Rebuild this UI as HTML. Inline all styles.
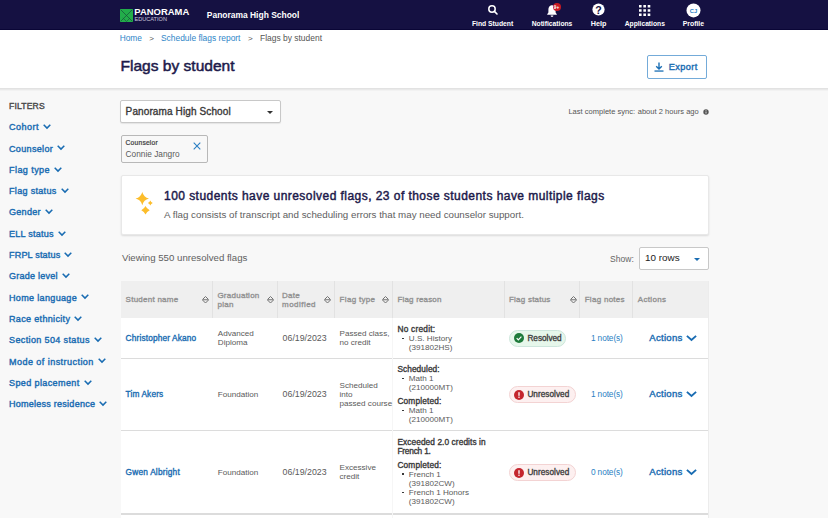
<!DOCTYPE html>
<html><head><meta charset="utf-8"><style>
html,body{margin:0;padding:0;}
body{width:828px;height:518px;overflow:hidden;position:relative;background:#f8f8f8;font-family:"Liberation Sans", sans-serif;}
.t{position:absolute;white-space:nowrap;line-height:1;font-family:"Liberation Sans", sans-serif;}
.pb{display:inline-block;width:0;height:0;vertical-align:baseline}
svg{overflow:visible}
</style></head><body>
<div style="position:absolute;left:0px;top:0px;width:828px;height:30px;background:#151142"></div>
<div style="position:absolute;left:0px;top:29px;width:828px;height:1px;background:#0a0636"></div>
<div style="position:absolute;left:0px;top:30px;width:828px;height:58px;background:#fff"></div>
<div style="position:absolute;left:0px;top:88px;width:828px;height:1px;background:#e2e2e2"></div>
<div style="position:absolute;left:0px;top:89px;width:828px;height:1px;background:#e9e9e9"></div>
<div style="position:absolute;left:0px;top:90px;width:828px;height:1px;background:#f2f2f2"></div>
<div style="position:absolute;left:0px;top:91px;width:828px;height:427px;background:#f8f8f8"></div>
<svg style="position:absolute;left:120px;top:8.8px" width="13" height="13" viewBox="0 0 13 13"><rect width="13" height="13" fill="#22ad4a"/><path d="M0.6 0.6L12.4 12.4M12.4 0.6L0.6 12.4" stroke="#17503a" stroke-width="0.7"/><path d="M2.8 8.9L6.5 12.5L10 9" fill="none" stroke="#17503a" stroke-width="0.6"/></svg>
<div class="t" style="left:134.3px;top:7.204px;font-size:9.461px;font-weight:700;color:#fff;"><span id="x0" class="tx">PANORAMA</span><span id="p0" class="pb"></span></div>
<div class="t" style="left:134.5px;top:17.307px;font-size:5.589px;font-weight:400;color:#c9c6dc;"><span id="x1" class="tx">EDUCATION</span><span id="p1" class="pb"></span></div>
<div class="t" style="left:206.8px;top:11.112px;font-size:8.465px;font-weight:700;color:#fff;"><span id="x2" class="tx">Panorama High School</span><span id="p2" class="pb"></span></div>
<div class="t" style="left:452.6px;top:20.810px;font-size:6.785px;font-weight:700;color:#fff;width:80px;text-align:center"><span id="x3" class="tx">Find Student</span><span id="p3" class="pb"></span></div>
<div class="t" style="left:512px;top:20.808px;font-size:6.713px;font-weight:700;color:#fff;width:80px;text-align:center"><span id="x4" class="tx">Notifications</span><span id="p4" class="pb"></span></div>
<div class="t" style="left:558.5px;top:19.810px;font-size:7.209px;font-weight:700;color:#fff;width:80px;text-align:center"><span id="x5" class="tx">Help</span><span id="p5" class="pb"></span></div>
<div class="t" style="left:604.8px;top:20.812px;font-size:6.690px;font-weight:700;color:#fff;width:80px;text-align:center"><span id="x6" class="tx">Applications</span><span id="p6" class="pb"></span></div>
<div class="t" style="left:653.4px;top:20.804px;font-size:6.884px;font-weight:700;color:#fff;width:80px;text-align:center"><span id="x7" class="tx">Profile</span><span id="p7" class="pb"></span></div>
<svg style="position:absolute;left:487px;top:4px" width="12" height="12" viewBox="0 0 12 12"><circle cx="5" cy="5" r="3.2" fill="none" stroke="#fff" stroke-width="1.5"/><path d="M7.4 7.4L10 10" stroke="#fff" stroke-width="1.6" stroke-linecap="round"/></svg>
<svg style="position:absolute;left:545px;top:3px" width="16" height="15" viewBox="0 0 16 15"><path d="M6.5 2.3C4.4 2.7 3.4 4.4 3.4 6.5V9.6L2.2 11.2V11.8H11.8V11.2L10.6 9.6V6.5C10.6 4.4 9.6 2.7 7.5 2.3Z" fill="#fff"/><path d="M5.6 12.5H8.4A1.4 1.4 0 0 1 5.6 12.5Z" fill="#fff"/><circle cx="12" cy="4" r="4" fill="#c81a24"/><text x="11.6" y="5.8" font-size="4.6" font-weight="700" fill="#fff" text-anchor="middle" font-family="Liberation Sans" letter-spacing="0.2">9+</text></svg>
<svg style="position:absolute;left:592.2px;top:3.4px" width="13" height="13" viewBox="0 0 13 13"><circle cx="6.5" cy="6.5" r="6.1" fill="#fff"/><text x="6.6" y="10.6" font-size="10.6" font-weight="700" fill="#151142" text-anchor="middle" font-family="Liberation Sans">?</text></svg>
<svg style="position:absolute;left:638.8px;top:4.5px" width="12" height="12" viewBox="0 0 12 12"><rect x="0.0" y="0.0" width="2.6" height="2.5" fill="#fff"/><rect x="0.0" y="4.25" width="2.6" height="2.5" fill="#fff"/><rect x="0.0" y="8.5" width="2.6" height="2.5" fill="#fff"/><rect x="4.35" y="0.0" width="2.6" height="2.5" fill="#fff"/><rect x="4.35" y="4.25" width="2.6" height="2.5" fill="#fff"/><rect x="4.35" y="8.5" width="2.6" height="2.5" fill="#fff"/><rect x="8.7" y="0.0" width="2.6" height="2.5" fill="#fff"/><rect x="8.7" y="4.25" width="2.6" height="2.5" fill="#fff"/><rect x="8.7" y="8.5" width="2.6" height="2.5" fill="#fff"/></svg>
<svg style="position:absolute;left:685.8px;top:3px" width="15" height="15" viewBox="0 0 15 15"><circle cx="7.5" cy="7.4" r="7" fill="#fff"/><text x="7.5" y="9.6" font-size="5.8" font-weight="700" fill="#2a7fc4" text-anchor="middle" font-family="Liberation Sans">CJ</text></svg>
<div class="t" style="left:119.7px;top:34.108px;font-size:8.360px;font-weight:400;color:#2f86c8;"><span id="x8" class="tx">Home</span><span id="p8" class="pb"></span></div>
<div class="t" style="left:149.2px;top:35.109px;font-size:8.100px;font-weight:400;color:#555;"><span id="x9" class="tx">&gt;</span><span id="p9" class="pb"></span></div>
<div class="t" style="left:161px;top:34.109px;font-size:8.414px;font-weight:400;color:#2f86c8;"><span id="x10" class="tx">Schedule flags report</span><span id="p10" class="pb"></span></div>
<div class="t" style="left:248px;top:35.109px;font-size:8.100px;font-weight:400;color:#555;"><span id="x11" class="tx">&gt;</span><span id="p11" class="pb"></span></div>
<div class="t" style="left:260px;top:34.101px;font-size:8.460px;font-weight:400;color:#555;"><span id="x12" class="tx">Flags by student</span><span id="p12" class="pb"></span></div>
<div class="t" style="left:120.5px;top:58.214px;font-size:15.559px;font-weight:400;color:#1d1a4b;-webkit-text-stroke:0.5px #1d1a4b;"><span id="x13" class="tx">Flags by student</span><span id="p13" class="pb"></span></div>
<div style="position:absolute;left:647px;top:55px;width:60px;height:23.5px;box-sizing:border-box;border:1px solid #74abd9;border-radius:2px;background:#fff"></div>
<svg style="position:absolute;left:654px;top:62px" width="10" height="10" viewBox="0 0 10 10"><path d="M5 0.5V6.8M2.2 4.2L5 7L7.8 4.2" fill="none" stroke="#1b6fb5" stroke-width="1.4"/><rect x="0.5" y="8.4" width="9" height="1.3" fill="#1b6fb5"/></svg>
<div class="t" style="left:668.8px;top:62.509px;font-size:9.200px;font-weight:400;color:#196cb2;-webkit-text-stroke:0.4px #196cb2;letter-spacing:0.3729px;"><span id="x14" class="tx">Export</span><span id="p14" class="pb"></span></div>
<div class="t" style="left:9px;top:101.911px;font-size:8.600px;font-weight:400;color:#4a4a4a;-webkit-text-stroke:0.4px #4a4a4a;letter-spacing:0.1710px;"><span id="x15" class="tx">FILTERS</span><span id="p15" class="pb"></span></div>
<div class="t" style="left:9px;top:123.208px;font-size:9.050px;font-weight:400;color:#196cb2;-webkit-text-stroke:0.4px #196cb2;letter-spacing:0.4906px;"><span id="x16" class="tx">Cohort</span><span id="p16" class="pb"></span></div>
<svg style="position:absolute;left:43.0px;top:124.0px" width="8" height="5" viewBox="0 0 8 5"><path d="M0.7 0.7L4 4.1L7.3 0.7" fill="none" stroke="#196cb2" stroke-width="1.5"/></svg>
<div class="t" style="left:9px;top:144.511px;font-size:9.050px;font-weight:400;color:#196cb2;-webkit-text-stroke:0.4px #196cb2;letter-spacing:0.3167px;"><span id="x17" class="tx">Counselor</span><span id="p17" class="pb"></span></div>
<svg style="position:absolute;left:57.0px;top:145.3px" width="8" height="5" viewBox="0 0 8 5"><path d="M0.7 0.7L4 4.1L7.3 0.7" fill="none" stroke="#196cb2" stroke-width="1.5"/></svg>
<div class="t" style="left:9px;top:165.814px;font-size:9.050px;font-weight:400;color:#196cb2;-webkit-text-stroke:0.4px #196cb2;letter-spacing:0.4201px;"><span id="x18" class="tx">Flag type</span><span id="p18" class="pb"></span></div>
<svg style="position:absolute;left:53.9px;top:166.6px" width="8" height="5" viewBox="0 0 8 5"><path d="M0.7 0.7L4 4.1L7.3 0.7" fill="none" stroke="#196cb2" stroke-width="1.5"/></svg>
<div class="t" style="left:9px;top:187.102px;font-size:9.050px;font-weight:400;color:#196cb2;-webkit-text-stroke:0.4px #196cb2;letter-spacing:0.3045px;"><span id="x19" class="tx">Flag status</span><span id="p19" class="pb"></span></div>
<svg style="position:absolute;left:60.5px;top:187.9px" width="8" height="5" viewBox="0 0 8 5"><path d="M0.7 0.7L4 4.1L7.3 0.7" fill="none" stroke="#196cb2" stroke-width="1.5"/></svg>
<div class="t" style="left:9px;top:208.405px;font-size:9.050px;font-weight:400;color:#196cb2;-webkit-text-stroke:0.4px #196cb2;letter-spacing:0.2688px;"><span id="x20" class="tx">Gender</span><span id="p20" class="pb"></span></div>
<svg style="position:absolute;left:44.7px;top:209.2px" width="8" height="5" viewBox="0 0 8 5"><path d="M0.7 0.7L4 4.1L7.3 0.7" fill="none" stroke="#196cb2" stroke-width="1.5"/></svg>
<div class="t" style="left:9px;top:229.708px;font-size:9.050px;font-weight:400;color:#196cb2;-webkit-text-stroke:0.4px #196cb2;letter-spacing:0.2478px;"><span id="x21" class="tx">ELL status</span><span id="p21" class="pb"></span></div>
<svg style="position:absolute;left:57.8px;top:230.5px" width="8" height="5" viewBox="0 0 8 5"><path d="M0.7 0.7L4 4.1L7.3 0.7" fill="none" stroke="#196cb2" stroke-width="1.5"/></svg>
<div class="t" style="left:9px;top:251.011px;font-size:9.050px;font-weight:400;color:#196cb2;-webkit-text-stroke:0.4px #196cb2;letter-spacing:0.1770px;"><span id="x22" class="tx">FRPL status</span><span id="p22" class="pb"></span></div>
<svg style="position:absolute;left:64.3px;top:251.8px" width="8" height="5" viewBox="0 0 8 5"><path d="M0.7 0.7L4 4.1L7.3 0.7" fill="none" stroke="#196cb2" stroke-width="1.5"/></svg>
<div class="t" style="left:9px;top:272.314px;font-size:9.050px;font-weight:400;color:#196cb2;-webkit-text-stroke:0.4px #196cb2;letter-spacing:0.2213px;"><span id="x23" class="tx">Grade level</span><span id="p23" class="pb"></span></div>
<svg style="position:absolute;left:61.6px;top:273.1px" width="8" height="5" viewBox="0 0 8 5"><path d="M0.7 0.7L4 4.1L7.3 0.7" fill="none" stroke="#196cb2" stroke-width="1.5"/></svg>
<div class="t" style="left:9px;top:293.602px;font-size:9.050px;font-weight:400;color:#196cb2;-webkit-text-stroke:0.4px #196cb2;letter-spacing:0.3238px;"><span id="x24" class="tx">Home language</span><span id="p24" class="pb"></span></div>
<svg style="position:absolute;left:81.0px;top:294.4px" width="8" height="5" viewBox="0 0 8 5"><path d="M0.7 0.7L4 4.1L7.3 0.7" fill="none" stroke="#196cb2" stroke-width="1.5"/></svg>
<div class="t" style="left:9px;top:314.905px;font-size:9.050px;font-weight:400;color:#196cb2;-webkit-text-stroke:0.4px #196cb2;letter-spacing:0.3194px;"><span id="x25" class="tx">Race ethnicity</span><span id="p25" class="pb"></span></div>
<svg style="position:absolute;left:74.2px;top:315.7px" width="8" height="5" viewBox="0 0 8 5"><path d="M0.7 0.7L4 4.1L7.3 0.7" fill="none" stroke="#196cb2" stroke-width="1.5"/></svg>
<div class="t" style="left:9px;top:336.208px;font-size:9.050px;font-weight:400;color:#196cb2;-webkit-text-stroke:0.4px #196cb2;letter-spacing:0.3535px;"><span id="x26" class="tx">Section 504 status</span><span id="p26" class="pb"></span></div>
<svg style="position:absolute;left:93.7px;top:337.0px" width="8" height="5" viewBox="0 0 8 5"><path d="M0.7 0.7L4 4.1L7.3 0.7" fill="none" stroke="#196cb2" stroke-width="1.5"/></svg>
<div class="t" style="left:9px;top:357.511px;font-size:9.050px;font-weight:400;color:#196cb2;-webkit-text-stroke:0.4px #196cb2;letter-spacing:0.4401px;"><span id="x27" class="tx">Mode of instruction</span><span id="p27" class="pb"></span></div>
<svg style="position:absolute;left:97.7px;top:358.3px" width="8" height="5" viewBox="0 0 8 5"><path d="M0.7 0.7L4 4.1L7.3 0.7" fill="none" stroke="#196cb2" stroke-width="1.5"/></svg>
<div class="t" style="left:9px;top:378.814px;font-size:9.050px;font-weight:400;color:#196cb2;-webkit-text-stroke:0.4px #196cb2;letter-spacing:0.3721px;"><span id="x28" class="tx">Sped placement</span><span id="p28" class="pb"></span></div>
<svg style="position:absolute;left:83.5px;top:379.6px" width="8" height="5" viewBox="0 0 8 5"><path d="M0.7 0.7L4 4.1L7.3 0.7" fill="none" stroke="#196cb2" stroke-width="1.5"/></svg>
<div class="t" style="left:9px;top:400.102px;font-size:9.050px;font-weight:400;color:#196cb2;-webkit-text-stroke:0.4px #196cb2;letter-spacing:0.2351px;"><span id="x29" class="tx">Homeless residence</span><span id="p29" class="pb"></span></div>
<svg style="position:absolute;left:99.1px;top:400.9px" width="8" height="5" viewBox="0 0 8 5"><path d="M0.7 0.7L4 4.1L7.3 0.7" fill="none" stroke="#196cb2" stroke-width="1.5"/></svg>
<div style="position:absolute;left:120px;top:100px;width:161px;height:23px;box-sizing:border-box;border:1px solid #c8c8c8;border-radius:2px;background:#fff;box-shadow:0 1px 1px rgba(0,0,0,0.08)"></div>
<div class="t" style="left:125.6px;top:107.004px;font-size:10.000px;font-weight:400;color:#383838;-webkit-text-stroke:0.35px #383838;letter-spacing:0.1178px;"><span id="x30" class="tx">Panorama High School</span><span id="p30" class="pb"></span></div>
<svg style="position:absolute;left:266.5px;top:110.8px" width="6" height="3" viewBox="0 0 6 3"><path d="M0 0H6L3 3Z" fill="#333"/></svg>
<div style="position:absolute;left:120.6px;top:134.7px;width:87.6px;height:28.7px;box-sizing:border-box;border:1px solid #b8b8b8;border-radius:2px;background:#f8f8f8"></div>
<div class="t" style="left:125.6px;top:140.303px;font-size:6.700px;font-weight:400;color:#3a3a3a;-webkit-text-stroke:0.2px #3a3a3a;letter-spacing:0.2017px;"><span id="x31" class="tx">Counselor</span><span id="p31" class="pb"></span></div>
<div class="t" style="left:125.6px;top:149.707px;font-size:8.313px;font-weight:400;color:#5a5a5a;"><span id="x32" class="tx">Connie Jangro</span><span id="p32" class="pb"></span></div>
<svg style="position:absolute;left:193.3px;top:141.6px" width="8" height="8" viewBox="0 0 8 8"><path d="M0.7 0.7L7.3 7.3M7.3 0.7L0.7 7.3" stroke="#2a7fc4" stroke-width="1.1"/></svg>
<div class="t" style="left:568.4px;top:108.011px;font-size:7.500px;font-weight:400;color:#555;letter-spacing:0.0220px;"><span id="x33" class="tx">Last complete sync:</span><span id="p33" class="pb"></span></div>
<div class="t" style="left:637.7px;top:108.011px;font-size:7.500px;font-weight:400;color:#555;letter-spacing:0.0371px;"><span id="x34" class="tx">about 2 hours ago</span><span id="p34" class="pb"></span></div>
<svg style="position:absolute;left:703px;top:109px" width="6" height="6" viewBox="0 0 6 6"><circle cx="3" cy="3" r="2.7" fill="#555"/><rect x="2.6" y="2.5" width="0.8" height="2" fill="#fff"/><rect x="2.6" y="1.3" width="0.8" height="0.7" fill="#fff"/></svg>
<div style="position:absolute;left:121px;top:175px;width:588px;height:60px;box-sizing:border-box;border:1px solid #e8e8e8;border-radius:2px;background:#fff;box-shadow:0 1px 2px rgba(0,0,0,0.12)"></div>
<svg style="position:absolute;left:130px;top:188px" width="28" height="30" viewBox="0 0 28 30"><path d="M12.3 3.8999999999999995Q13.64 9.26 19.0 10.6Q13.64 11.94 12.3 17.3Q10.96 11.94 5.6000000000000005 10.6Q10.96 9.26 12.3 3.8999999999999995Z" fill="#fcbd2b"/><path d="M20.3 12.6Q20.925 14.475 22.8 15.1Q20.925 15.725 20.3 17.6Q19.675 15.725 17.8 15.1Q19.675 14.475 20.3 12.6Z" fill="#fcbd2b"/><path d="M15.5 18.1Q16.844 20.956 19.7 22.3Q16.844 23.644000000000002 15.5 26.5Q14.156 23.644000000000002 11.3 22.3Q14.156 20.956 15.5 18.1Z" fill="#fcbd2b"/></svg>
<div class="t" style="left:164px;top:189.514px;font-size:12.000px;font-weight:400;color:#1d1a4b;-webkit-text-stroke:0.45px #1d1a4b;letter-spacing:0.4518px;"><span id="x35" class="tx">100 students have unresolved flags, 23 of those students have multiple flags</span><span id="p35" class="pb"></span></div>
<div class="t" style="left:164px;top:210.308px;font-size:9.759px;font-weight:400;color:#5e5e5e;"><span id="x36" class="tx">A flag consists of transcript and scheduling errors that may need counselor support.</span><span id="p36" class="pb"></span></div>
<div class="t" style="left:121.9px;top:252.813px;font-size:9.679px;font-weight:400;color:#5f5f5f;"><span id="x37" class="tx">Viewing 550 unresolved flags</span><span id="p37" class="pb"></span></div>
<div class="t" style="left:610.1px;top:254.712px;font-size:8.565px;font-weight:400;color:#666;"><span id="x38" class="tx">Show:</span><span id="p38" class="pb"></span></div>
<div style="position:absolute;left:639px;top:247px;width:69.5px;height:23px;box-sizing:border-box;border:1px solid #c8c8c8;border-radius:2px;background:#fff"></div>
<div class="t" style="left:645px;top:253.409px;font-size:9.894px;font-weight:400;color:#222;"><span id="x39" class="tx">10 rows</span><span id="p39" class="pb"></span></div>
<svg style="position:absolute;left:694px;top:258px" width="6" height="3" viewBox="0 0 6 3"><path d="M0 0H6L3 3Z" fill="#196cb2"/></svg>
<div style="position:absolute;left:121px;top:281px;width:587px;height:37px;background:#efefef"></div>
<div style="position:absolute;left:212.3px;top:281px;width:1px;height:37px;background:#e2e2e2"></div>
<div style="position:absolute;left:276.8px;top:281px;width:1px;height:37px;background:#e2e2e2"></div>
<div style="position:absolute;left:334.3px;top:281px;width:1px;height:37px;background:#e2e2e2"></div>
<div style="position:absolute;left:392.3px;top:281px;width:1px;height:37px;background:#e2e2e2"></div>
<div style="position:absolute;left:503.6px;top:281px;width:1px;height:37px;background:#e2e2e2"></div>
<div style="position:absolute;left:579.4px;top:281px;width:1px;height:37px;background:#e2e2e2"></div>
<div style="position:absolute;left:632.4px;top:281px;width:1px;height:37px;background:#e2e2e2"></div>
<div class="t" style="left:125.6px;top:296.403px;font-size:8.000px;font-weight:400;color:#929292;-webkit-text-stroke:0.35px #929292;letter-spacing:0.2490px;"><span id="x40" class="tx">Student name</span><span id="p40" class="pb"></span></div>
<svg style="position:absolute;left:201.5px;top:295.6px" width="7" height="8" viewBox="0 0 7 8"><path d="M0.6 3.4L3.5 0.5L6.4 3.4M0.6 4.1L3.5 7L6.4 4.1M0.4 3.75H6.6" fill="none" stroke="#727272" stroke-width="1"/></svg>
<div class="t" style="left:217.4px;top:291.812px;font-size:8.000px;font-weight:400;color:#929292;-webkit-text-stroke:0.35px #929292;letter-spacing:0.2606px;"><span id="x41" class="tx">Graduation</span><span id="p41" class="pb"></span></div>
<div class="t" style="left:217.4px;top:301.312px;font-size:8.000px;font-weight:400;color:#929292;-webkit-text-stroke:0.35px #929292;letter-spacing:0.2878px;"><span id="x42" class="tx">plan</span><span id="p42" class="pb"></span></div>
<svg style="position:absolute;left:266.5px;top:295.6px" width="7" height="8" viewBox="0 0 7 8"><path d="M0.6 3.4L3.5 0.5L6.4 3.4M0.6 4.1L3.5 7L6.4 4.1M0.4 3.75H6.6" fill="none" stroke="#727272" stroke-width="1"/></svg>
<div class="t" style="left:282px;top:291.812px;font-size:8.000px;font-weight:400;color:#929292;-webkit-text-stroke:0.35px #929292;letter-spacing:0.2878px;"><span id="x43" class="tx">Date</span><span id="p43" class="pb"></span></div>
<div class="t" style="left:282px;top:301.312px;font-size:8.000px;font-weight:400;color:#929292;-webkit-text-stroke:0.35px #929292;letter-spacing:0.4688px;"><span id="x44" class="tx">modified</span><span id="p44" class="pb"></span></div>
<svg style="position:absolute;left:323.8px;top:295.6px" width="7" height="8" viewBox="0 0 7 8"><path d="M0.6 3.4L3.5 0.5L6.4 3.4M0.6 4.1L3.5 7L6.4 4.1M0.4 3.75H6.6" fill="none" stroke="#727272" stroke-width="1"/></svg>
<div class="t" style="left:339.6px;top:296.403px;font-size:8.000px;font-weight:400;color:#929292;-webkit-text-stroke:0.35px #929292;letter-spacing:0.3104px;"><span id="x45" class="tx">Flag type</span><span id="p45" class="pb"></span></div>
<svg style="position:absolute;left:382.3px;top:295.6px" width="7" height="8" viewBox="0 0 7 8"><path d="M0.6 3.4L3.5 0.5L6.4 3.4M0.6 4.1L3.5 7L6.4 4.1M0.4 3.75H6.6" fill="none" stroke="#727272" stroke-width="1"/></svg>
<div class="t" style="left:397.5px;top:296.403px;font-size:8.000px;font-weight:400;color:#929292;-webkit-text-stroke:0.35px #929292;letter-spacing:0.1682px;"><span id="x46" class="tx">Flag reason</span><span id="p46" class="pb"></span></div>
<div class="t" style="left:509px;top:296.403px;font-size:8.000px;font-weight:400;color:#929292;-webkit-text-stroke:0.35px #929292;letter-spacing:0.2236px;"><span id="x47" class="tx">Flag status</span><span id="p47" class="pb"></span></div>
<svg style="position:absolute;left:569.8px;top:295.6px" width="7" height="8" viewBox="0 0 7 8"><path d="M0.6 3.4L3.5 0.5L6.4 3.4M0.6 4.1L3.5 7L6.4 4.1M0.4 3.75H6.6" fill="none" stroke="#727272" stroke-width="1"/></svg>
<div class="t" style="left:584.7px;top:296.403px;font-size:8.000px;font-weight:400;color:#929292;-webkit-text-stroke:0.35px #929292;letter-spacing:0.2841px;"><span id="x48" class="tx">Flag notes</span><span id="p48" class="pb"></span></div>
<div class="t" style="left:637.8px;top:296.403px;font-size:8.000px;font-weight:400;color:#929292;-webkit-text-stroke:0.35px #929292;letter-spacing:0.3379px;"><span id="x49" class="tx">Actions</span><span id="p49" class="pb"></span></div>
<div style="position:absolute;left:121px;top:318px;width:587px;height:200px;background:#fff"></div>
<div style="position:absolute;left:708px;top:281px;width:1px;height:237px;background:#ececec"></div>
<div style="position:absolute;left:121px;top:357.5px;width:587px;height:1.3px;background:#dcdcdc"></div>
<div style="position:absolute;left:121px;top:430px;width:587px;height:1.3px;background:#dcdcdc"></div>
<div style="position:absolute;left:121px;top:513.3px;width:587px;height:1.3px;background:#dcdcdc"></div>
<div style="position:absolute;left:392.3px;top:318px;width:1px;height:200px;background:#f6f6f6"></div>
<div class="t" style="left:125.6px;top:334.005px;font-size:8.300px;font-weight:400;color:#196cb2;-webkit-text-stroke:0.35px #196cb2;letter-spacing:0.1491px;"><span id="x50" class="tx">Christopher Akano</span><span id="p50" class="pb"></span></div>
<div class="t" style="left:217.8px;top:330.306px;font-size:8.100px;font-weight:400;color:#5a5a5a;"><span id="x51" class="tx">Advanced</span><span id="p51" class="pb"></span></div>
<div class="t" style="left:217.8px;top:339.306px;font-size:8.100px;font-weight:400;color:#5a5a5a;"><span id="x52" class="tx">Diploma</span><span id="p52" class="pb"></span></div>
<div class="t" style="left:282.6px;top:334.004px;font-size:8.800px;font-weight:400;color:#5a5a5a;"><span id="x53" class="tx">06/19/2023</span><span id="p53" class="pb"></span></div>
<div class="t" style="left:339.5px;top:330.306px;font-size:8.100px;font-weight:400;color:#5a5a5a;"><span id="x54" class="tx">Passed class,</span><span id="p54" class="pb"></span></div>
<div class="t" style="left:339.5px;top:339.306px;font-size:8.100px;font-weight:400;color:#5a5a5a;"><span id="x55" class="tx">no credit</span><span id="p55" class="pb"></span></div>
<div class="t" style="left:397.4px;top:324.808px;font-size:8.300px;font-weight:400;color:#383838;-webkit-text-stroke:0.35px #383838;letter-spacing:0.2484px;"><span id="x56" class="tx">No credit:</span><span id="p56" class="pb"></span></div>
<div style="position:absolute;left:402.3px;top:337.5px;width:1.8px;height:1.6px;background:#3a3a3a"></div>
<div class="t" style="left:408.8px;top:335.003px;font-size:8.100px;font-weight:400;color:#5a5a5a;"><span id="x57" class="tx">U.S. History</span><span id="p57" class="pb"></span></div>
<div class="t" style="left:408.8px;top:343.806px;font-size:8.100px;font-weight:400;color:#5a5a5a;"><span id="x58" class="tx">(391802HS)</span><span id="p58" class="pb"></span></div>
<div style="position:absolute;left:509.3px;top:329.7px;width:57px;height:17px;box-sizing:border-box;border:1px solid #cde6dc;border-radius:9px;background:#e6f7eb"></div>
<svg style="position:absolute;left:514.2px;top:333.3px" width="10" height="10" viewBox="0 0 10 10"><circle cx="5" cy="5" r="5" fill="#1d7a3a"/><path d="M2.7 5.2L4.3 6.8L7.4 3.7" fill="none" stroke="#fff" stroke-width="1.2"/></svg>
<div class="t" style="left:527.4px;top:335.012px;font-size:8.200px;font-weight:400;color:#404040;-webkit-text-stroke:0.35px #404040;letter-spacing:0.0199px;"><span id="x59" class="tx">Resolved</span><span id="p59" class="pb"></span></div>
<div class="t" style="left:590.9px;top:334.202px;font-size:8.300px;font-weight:400;color:#2a7fc4;letter-spacing:-0.0944px;"><span id="x60" class="tx">1 note(s)</span><span id="p60" class="pb"></span></div>
<div class="t" style="left:649.3px;top:333.302px;font-size:9.600px;font-weight:400;color:#196cb2;-webkit-text-stroke:0.4px #196cb2;letter-spacing:0.2616px;"><span id="x61" class="tx">Actions</span><span id="p61" class="pb"></span></div>
<svg style="position:absolute;left:686px;top:334.8px" width="11" height="6" viewBox="0 0 11 6"><path d="M0.9 0.9L5.5 5L10.1 0.9" fill="none" stroke="#196cb2" stroke-width="1.9"/></svg>
<div class="t" style="left:125.6px;top:390.005px;font-size:8.300px;font-weight:400;color:#196cb2;-webkit-text-stroke:0.35px #196cb2;letter-spacing:0.1247px;"><span id="x62" class="tx">Tim Akers</span><span id="p62" class="pb"></span></div>
<div class="t" style="left:217.8px;top:391.003px;font-size:8.100px;font-weight:400;color:#5a5a5a;"><span id="x63" class="tx">Foundation</span><span id="p63" class="pb"></span></div>
<div class="t" style="left:282.6px;top:390.004px;font-size:8.800px;font-weight:400;color:#5a5a5a;"><span id="x64" class="tx">06/19/2023</span><span id="p64" class="pb"></span></div>
<div class="t" style="left:339.5px;top:382.215px;font-size:8.100px;font-weight:400;color:#5a5a5a;"><span id="x65" class="tx">Scheduled</span><span id="p65" class="pb"></span></div>
<div class="t" style="left:339.5px;top:391.215px;font-size:8.100px;font-weight:400;color:#5a5a5a;"><span id="x66" class="tx">into</span><span id="p66" class="pb"></span></div>
<div class="t" style="left:339.5px;top:400.215px;font-size:8.100px;font-weight:400;color:#5a5a5a;"><span id="x67" class="tx">passed course</span><span id="p67" class="pb"></span></div>
<div class="t" style="left:397.4px;top:364.808px;font-size:8.300px;font-weight:400;color:#383838;-webkit-text-stroke:0.35px #383838;letter-spacing:0.0769px;"><span id="x68" class="tx">Scheduled:</span><span id="p68" class="pb"></span></div>
<div style="position:absolute;left:402.3px;top:377.5px;width:1.8px;height:1.6px;background:#3a3a3a"></div>
<div class="t" style="left:408.8px;top:375.003px;font-size:8.100px;font-weight:400;color:#5a5a5a;"><span id="x69" class="tx">Math 1</span><span id="p69" class="pb"></span></div>
<div class="t" style="left:408.8px;top:384.003px;font-size:8.100px;font-weight:400;color:#5a5a5a;"><span id="x70" class="tx">(210000MT)</span><span id="p70" class="pb"></span></div>
<div class="t" style="left:397.4px;top:396.915px;font-size:8.300px;font-weight:400;color:#383838;-webkit-text-stroke:0.35px #383838;letter-spacing:0.1663px;"><span id="x71" class="tx">Completed:</span><span id="p71" class="pb"></span></div>
<div style="position:absolute;left:402.3px;top:409.5px;width:1.8px;height:1.6px;background:#3a3a3a"></div>
<div class="t" style="left:408.8px;top:407.003px;font-size:8.100px;font-weight:400;color:#5a5a5a;"><span id="x72" class="tx">Math 1</span><span id="p72" class="pb"></span></div>
<div class="t" style="left:408.8px;top:416.215px;font-size:8.100px;font-weight:400;color:#5a5a5a;"><span id="x73" class="tx">(210000MT)</span><span id="p73" class="pb"></span></div>
<div style="position:absolute;left:509.3px;top:385.8px;width:66.3px;height:17px;box-sizing:border-box;border:1px solid #f3d3d3;border-radius:9px;background:#fdf0f0"></div>
<svg style="position:absolute;left:514.2px;top:389.5px" width="10" height="10" viewBox="0 0 10 10"><circle cx="5" cy="5" r="5" fill="#c4262e"/><rect x="4.35" y="2.2" width="1.3" height="3.6" fill="#fff"/><rect x="4.35" y="6.6" width="1.3" height="1.3" fill="#fff"/></svg>
<div class="t" style="left:527.4px;top:391.102px;font-size:8.200px;font-weight:400;color:#404040;-webkit-text-stroke:0.35px #404040;letter-spacing:0.0478px;"><span id="x74" class="tx">Unresolved</span><span id="p74" class="pb"></span></div>
<div class="t" style="left:590.9px;top:390.112px;font-size:8.300px;font-weight:400;color:#2a7fc4;letter-spacing:-0.0944px;"><span id="x75" class="tx">1 note(s)</span><span id="p75" class="pb"></span></div>
<div class="t" style="left:649.3px;top:389.014px;font-size:9.600px;font-weight:400;color:#196cb2;-webkit-text-stroke:0.4px #196cb2;letter-spacing:0.2616px;"><span id="x76" class="tx">Actions</span><span id="p76" class="pb"></span></div>
<svg style="position:absolute;left:686px;top:390.5px" width="11" height="6" viewBox="0 0 11 6"><path d="M0.9 0.9L5.5 5L10.1 0.9" fill="none" stroke="#196cb2" stroke-width="1.9"/></svg>
<div class="t" style="left:125.6px;top:468.202px;font-size:8.300px;font-weight:400;color:#196cb2;-webkit-text-stroke:0.35px #196cb2;letter-spacing:0.2034px;"><span id="x77" class="tx">Gwen Albright</span><span id="p77" class="pb"></span></div>
<div class="t" style="left:217.8px;top:469.215px;font-size:8.100px;font-weight:400;color:#5a5a5a;"><span id="x78" class="tx">Foundation</span><span id="p78" class="pb"></span></div>
<div class="t" style="left:282.6px;top:468.201px;font-size:8.800px;font-weight:400;color:#5a5a5a;"><span id="x79" class="tx">06/19/2023</span><span id="p79" class="pb"></span></div>
<div class="t" style="left:339.5px;top:464.412px;font-size:8.100px;font-weight:400;color:#5a5a5a;"><span id="x80" class="tx">Excessive</span><span id="p80" class="pb"></span></div>
<div class="t" style="left:339.5px;top:473.412px;font-size:8.100px;font-weight:400;color:#5a5a5a;"><span id="x81" class="tx">credit</span><span id="p81" class="pb"></span></div>
<div class="t" style="left:397.4px;top:438.005px;font-size:8.300px;font-weight:400;color:#383838;-webkit-text-stroke:0.35px #383838;letter-spacing:0.0891px;"><span id="x82" class="tx">Exceeded 2.0 credits in</span><span id="p82" class="pb"></span></div>
<div class="t" style="left:397.4px;top:447.112px;font-size:8.300px;font-weight:400;color:#383838;-webkit-text-stroke:0.35px #383838;letter-spacing:-0.1958px;"><span id="x83" class="tx">French 1.</span><span id="p83" class="pb"></span></div>
<div class="t" style="left:397.4px;top:461.112px;font-size:8.300px;font-weight:400;color:#383838;-webkit-text-stroke:0.35px #383838;letter-spacing:0.1663px;"><span id="x84" class="tx">Completed:</span><span id="p84" class="pb"></span></div>
<div style="position:absolute;left:402.3px;top:473.4px;width:1.8px;height:1.6px;background:#3a3a3a"></div>
<div class="t" style="left:408.8px;top:470.912px;font-size:8.100px;font-weight:400;color:#5a5a5a;"><span id="x85" class="tx">French 1</span><span id="p85" class="pb"></span></div>
<div class="t" style="left:408.8px;top:480.109px;font-size:8.100px;font-weight:400;color:#5a5a5a;"><span id="x86" class="tx">(391802CW)</span><span id="p86" class="pb"></span></div>
<div style="position:absolute;left:402.3px;top:491.7px;width:1.8px;height:1.6px;background:#3a3a3a"></div>
<div class="t" style="left:408.8px;top:489.215px;font-size:8.100px;font-weight:400;color:#5a5a5a;"><span id="x87" class="tx">French 1 Honors</span><span id="p87" class="pb"></span></div>
<div class="t" style="left:408.8px;top:498.412px;font-size:8.100px;font-weight:400;color:#5a5a5a;"><span id="x88" class="tx">(391802CW)</span><span id="p88" class="pb"></span></div>
<div style="position:absolute;left:509.3px;top:463.8px;width:66.3px;height:17px;box-sizing:border-box;border:1px solid #f3d3d3;border-radius:9px;background:#fdf0f0"></div>
<svg style="position:absolute;left:514.2px;top:467.5px" width="10" height="10" viewBox="0 0 10 10"><circle cx="5" cy="5" r="5" fill="#c4262e"/><rect x="4.35" y="2.2" width="1.3" height="3.6" fill="#fff"/><rect x="4.35" y="6.6" width="1.3" height="1.3" fill="#fff"/></svg>
<div class="t" style="left:527.4px;top:469.102px;font-size:8.200px;font-weight:400;color:#404040;-webkit-text-stroke:0.35px #404040;letter-spacing:0.0478px;"><span id="x89" class="tx">Unresolved</span><span id="p89" class="pb"></span></div>
<div class="t" style="left:590.9px;top:468.005px;font-size:8.300px;font-weight:400;color:#2a7fc4;letter-spacing:-0.0944px;"><span id="x90" class="tx">0 note(s)</span><span id="p90" class="pb"></span></div>
<div class="t" style="left:649.3px;top:467.014px;font-size:9.600px;font-weight:400;color:#196cb2;-webkit-text-stroke:0.4px #196cb2;letter-spacing:0.2616px;"><span id="x91" class="tx">Actions</span><span id="p91" class="pb"></span></div>
<svg style="position:absolute;left:686px;top:468.5px" width="11" height="6" viewBox="0 0 11 6"><path d="M0.9 0.9L5.5 5L10.1 0.9" fill="none" stroke="#196cb2" stroke-width="1.9"/></svg>
</body></html>
